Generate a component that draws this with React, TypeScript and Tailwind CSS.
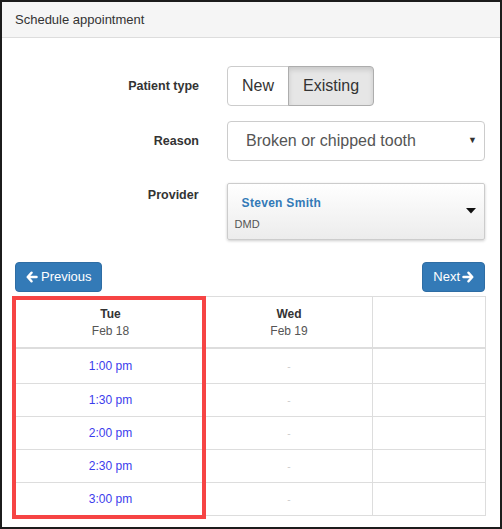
import React from "react";

const times = ["1:00 pm", "1:30 pm", "2:00 pm", "2:30 pm", "3:00 pm"];

function ArrowLeft() {
  return (
    <svg width="12" height="12" viewBox="0 0 24 24" fill="none">
      <path d="M11 3.5 L3.5 12 L11 20.5" stroke="white" strokeWidth="5" strokeLinecap="round" strokeLinejoin="round" />
      <path d="M5 12 H21" stroke="white" strokeWidth="5" strokeLinecap="round" />
    </svg>
  );
}

function ArrowRight() {
  return (
    <svg width="12" height="12" viewBox="0 0 24 24" fill="none">
      <path d="M13 3.5 L20.5 12 L13 20.5" stroke="white" strokeWidth="5" strokeLinecap="round" strokeLinejoin="round" />
      <path d="M3 12 H19" stroke="white" strokeWidth="5" strokeLinecap="round" />
    </svg>
  );
}

export default function App() {
  return (
    <div className="relative w-[502px] h-[529px] overflow-hidden border-2 border-[#1c1c1c] bg-white font-['Liberation_Sans',Arial,sans-serif] text-[#333]">
      <div className="flex h-[36px] items-center border-b border-[#ddd] bg-[#f5f5f5] px-[13px] text-[13px]">
        Schedule appointment
      </div>

      <div className="pl-[13px] pr-[15px] pt-[28px]">
        <div className="flex items-center">
          <label className="w-[184px] text-right text-[12.5px] font-bold">Patient type</label>
          <div className="ml-[28px] flex h-[40px] rounded-[4px] text-[16px]">
            <button className="rounded-l-[4px] border border-[#ccc] bg-white px-[14px]">New</button>
            <button className="-ml-px rounded-r-[4px] border border-[#adadad] bg-[#e6e6e6] px-[14px] shadow-[inset_0_3px_5px_rgba(0,0,0,0.125)]">
              Existing
            </button>
          </div>
        </div>

        <div className="mt-[15px] flex items-center">
          <label className="w-[184px] text-right text-[12.5px] font-bold">Reason</label>
          <div className="ml-[28px] flex h-[40px] w-[258px] items-center justify-between rounded-[4px] border border-[#ccc] bg-white pl-[18px] pr-[7px] text-[16px] text-[#555]">
            <span>Broken or chipped tooth</span>
            <span className="text-[9px] text-[#333]">▼</span>
          </div>
        </div>

        <div className="mt-[22px] flex items-start">
          <label className="w-[184px] pt-[3px] text-right text-[12.5px] font-bold">Provider</label>
          <div className="ml-[28px] flex h-[57px] w-[259px] items-center justify-between rounded-[2px] border border-[#ccc] bg-gradient-to-b from-white to-[#ececec] pr-[8px] shadow-[0_1px_3px_rgba(0,0,0,0.2)]">
            <div className="flex flex-col pt-[4px]">
              <span className="ml-[14px] text-[12px] font-bold tracking-[0.3px] text-[#337ab7]">Steven Smith</span>
              <span className="ml-[7px] mt-[4px] text-[11px] text-[#555]">DMD</span>
            </div>
            <svg width="10" height="6" viewBox="0 0 10 6" className="mt-[-1px]">
              <path d="M0 0 H10 L5 5.5 Z" fill="#111" />
            </svg>
          </div>
        </div>

        <div className="mt-[22px] flex justify-between">
          <button className="flex h-[30px] items-center gap-[3px] rounded-[4px] border border-[#2e6da4] bg-[#337ab7] pl-[10px] pr-[9px] text-[13px] text-white">
            <ArrowLeft />
            Previous
          </button>
          <button className="flex h-[30px] items-center gap-[2px] rounded-[4px] border border-[#2e6da4] bg-[#337ab7] pl-[10px] pr-[10px] text-[13px] text-white">
            Next
            <ArrowRight />
          </button>
        </div>

        <div className="mt-[4px] w-[471px] border border-[#ddd] text-[12px]">
          <div className="flex h-[52px] border-b-2 border-[#ddd]">
            <div className="flex w-[189px] flex-col items-center pt-[9px] leading-[17px]">
              <span className="font-bold">Tue</span>
              <span className="text-[#555]">Feb 18</span>
            </div>
            <div className="flex w-[167px] flex-col items-center border-l border-[#ddd] pt-[9px] leading-[17px]">
              <span className="font-bold">Wed</span>
              <span className="text-[#555]">Feb 19</span>
            </div>
            <div className="flex-1 border-l border-[#ddd]" />
          </div>
          {times.map((t, i) => (
            <div key={t} className={i === 0 ? "flex h-[34px]" : "flex h-[33px] border-t border-[#ddd]"}>
              <div className="flex w-[189px] items-center justify-center text-[#3c3cec]">{t}</div>
              <div className="flex w-[167px] items-center justify-center border-l border-[#ddd] text-[10px] text-[#ccc]">-</div>
              <div className="flex-1 border-l border-[#ddd]" />
            </div>
          ))}
        </div>
      </div>

      <div className="pointer-events-none absolute left-[10px] top-[294px] h-[223px] w-[194px] border-4 border-[#f64444]" />
    </div>
  );
}
